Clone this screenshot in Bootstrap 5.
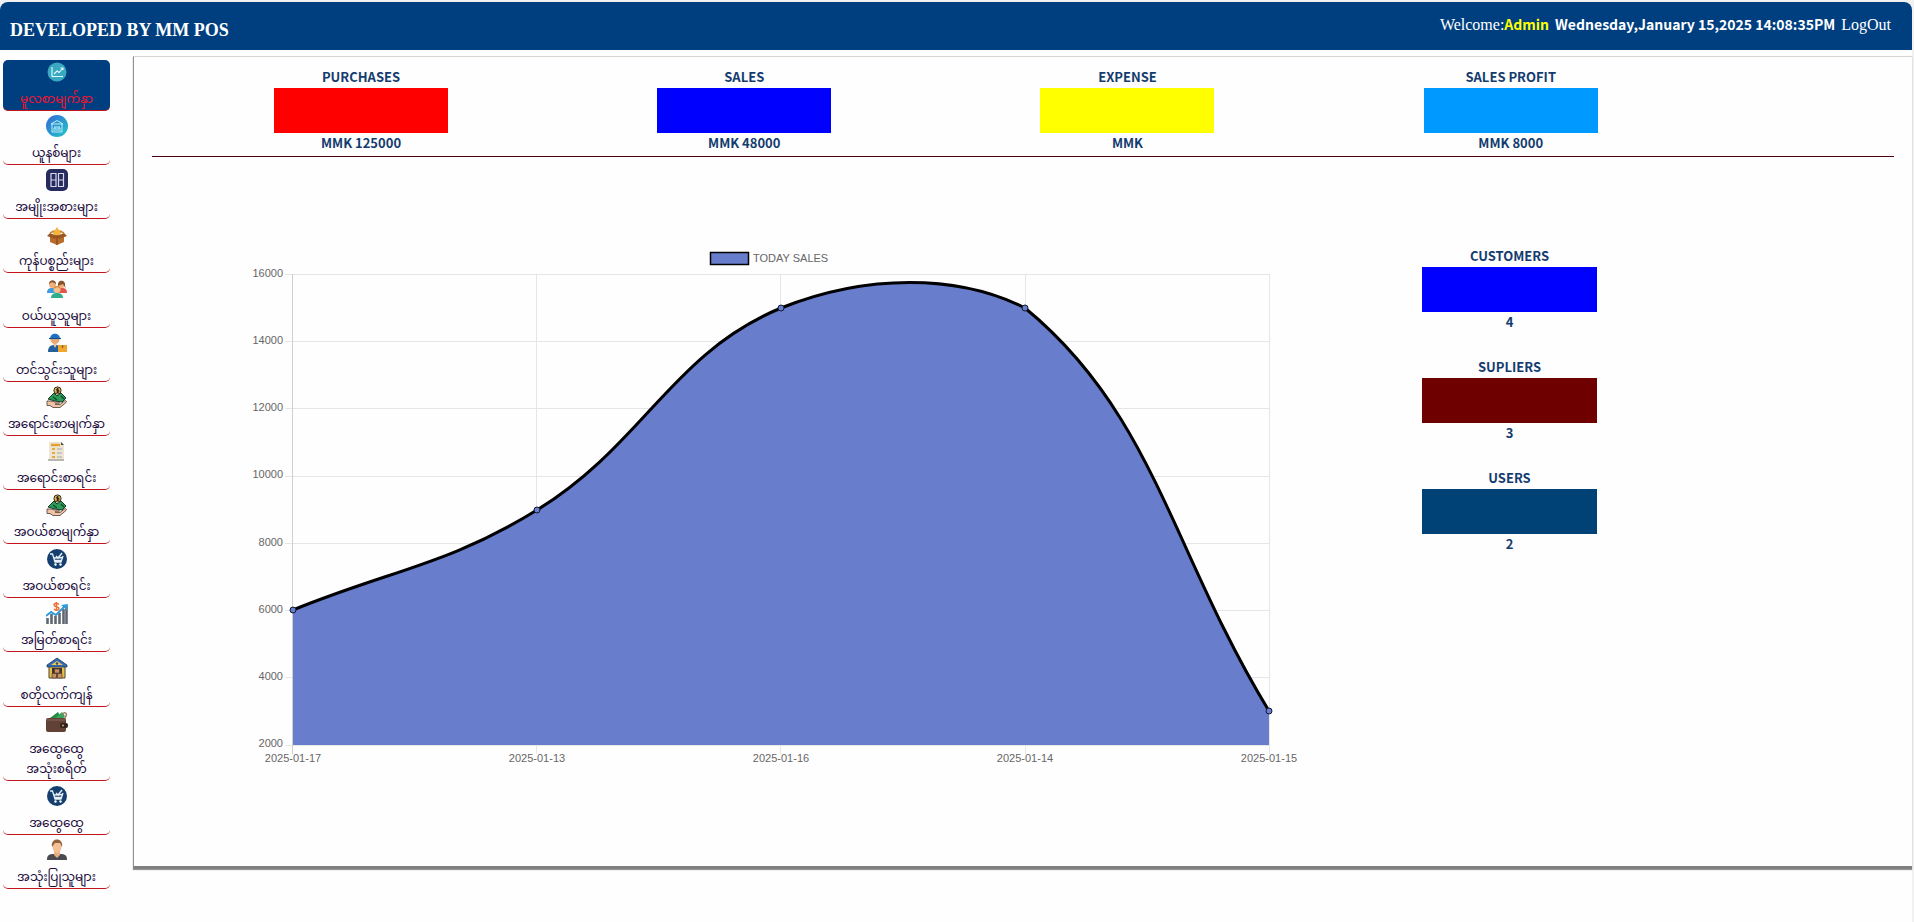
<!DOCTYPE html>
<html lang="my">
<head>
<meta charset="utf-8">
<meta name="viewport" content="width=device-width, initial-scale=1">
<title>MM POS</title>
<link rel="stylesheet" href="https://cdn.jsdelivr.net/npm/bootstrap@5.3.0/dist/css/bootstrap.min.css">
<style>
  body { background: #f1f1f1; font-family: "Noto Sans CJK JP", sans-serif; font-size: 13px; padding: 2px 2px 0 0; }
  .shell { background: #fefefe; min-height: calc(100vh - 2px); border-radius: 8px 8px 0 0; }
  .topbar { background: #003f7f; color: #fff; height: 48px; border-radius: 8px 8px 0 0; padding: 0 21px 0 10px; }
  .brand { font: bold 18px/24px "Liberation Serif", serif; color: #fff; padding-top: 16px; }
  .session { font: 16px/24px "Liberation Serif", serif; padding-top: 10px; }
  .session .who { font: bold 14px/24px "Noto Sans CJK JP", sans-serif; color: #ff0; }
  .session .when { font: bold 14px/24px "Noto Sans CJK JP", sans-serif; margin: 0 6px; }
  .side { width: 107px; margin: 10px 23px 0 3px; padding-bottom: 33px; }
  .side a { color: #200a3c; font: 12px/20px "Noto Sans Myanmar", "Padauk", sans-serif; border-bottom: 1px solid #c4141c; border-radius: 5px; padding: 1px 0 0; text-align: center; text-decoration: none; display: block; white-space: nowrap; }
  .side svg { display: block; width: 22px; height: 22px; margin: 0 auto 7px; }
  .side a.current { background: #003f7f; color: #f01432; }
  .panel { margin-top: 6px; border-top: 1px solid #d8d6d0; border-left: 1px solid #909090; border-bottom: 3px solid #808080; box-shadow: 0 1px 1px #999; padding: 8px 18px 0; margin-bottom: 53px; }
  .totals { width: 88%; margin-left: 1%; }
  .rule { border-top: 1px solid #4d0011; opacity: 1; margin: 3px 0 87px; }
  .stat { color: #143c6e; font-weight: 700; text-align: center; line-height: 23px; }
  .stat b { display: block; min-height: 20px; line-height: 20px; font-weight: inherit; }
  .swatch { height: 45px; width: 174px; max-width: 100%; margin: 0 auto; }
  .people .swatch { width: 100%; }
  .people .stat { margin-bottom: 23px; }
  .board { display: grid; grid-template-columns: 94fr 1057fr 119fr 175fr 297fr; }
  .plot { grid-column: 2; padding-top: 2px; }
  .people { grid-column: 4; }
  .plot svg { display: block; width: 100%; height: auto; font: 11px "Liberation Sans", Arial, sans-serif; }
</style>
<script src="https://cdn.jsdelivr.net/npm/bootstrap@5.3.0/dist/js/bootstrap.bundle.min.js"></script>
</head>
<body>
<svg class="d-none" aria-hidden="true">
  <symbol id="hand-money" viewBox="0 0 22 22">
    <path d="M2 13 8 7 11 10 15 7 20 12 16 16 9 15z" fill="#2c9b58" stroke="#123b27" stroke-width="1"/>
    <path d="m7 11 4 3m4-4 3 3" stroke="#0c4b2c" stroke-width="1.3"/>
    <circle cx="11.500" cy="4.500" r="3.600" fill="#d6b25a" stroke="#3b2b16"/>
    <path d="M12.800 3h-2v1.500h2v1.700h-2.300M11.600 2v5" fill="none" stroke="#241a0e" stroke-width=".9"/>
    <path d="M1 15h4l4 1h4c1 1 0 2-1 2H9l5 .500 5-4c1 0 2 1 1 2l-6 5H7l-3-2H1z" fill="#f0c3a5" stroke="#4a3a35" stroke-width=".8"/>
  </symbol>
  <symbol id="cart" viewBox="0 0 22 22">
    <circle cx="11" cy="11" r="10" fill="#143f6e"/>
    <path d="M4 6h2.500l2.500 8h6l2-6M8 10l8-.500M8.500 12.500h7" fill="none" stroke="#e8f1f8" stroke-width="1.300"/>
    <path d="m10 8 2 2 4-5" fill="none" stroke="#e8f1f8" stroke-width="1.400"/>
    <circle cx="9.500" cy="16.500" r="1.200" fill="#fff"/><circle cx="14.500" cy="16.500" r="1.200" fill="#fff"/>
  </symbol>
</svg>
<div class="shell d-flex flex-column">
  <header class="topbar d-flex justify-content-between">
    <div class="brand">DEVELOPED BY MM POS</div>
    <div class="session d-flex align-items-baseline">
      <span>Welcome:</span><span class="who">Admin</span>
      <span class="when">Wednesday,January 15,2025 14:08:35PM</span>
      <a href="#" class="text-white text-decoration-none">LogOut</a>
    </div>
  </header>
  <div class="d-flex flex-grow-1">
    <nav class="side d-flex flex-column justify-content-between flex-shrink-0">
      <a href="#" class="current"><svg viewBox="0 0 22 22"><circle cx="11" cy="11" r="9.500" fill="#39a9c1"/><path d="M6 6v9.500h11M8 13l3-3 2 1.500 4-4.500M14.500 7H17v2" fill="none" stroke="#e5fbff" stroke-width="1.100"/></svg>မူလစာမျက်နှာ</a>
      <a href="#"><svg viewBox="0 0 22 22"><defs><linearGradient id="sky" x2="1" y2="1"><stop stop-color="#3467d8"/><stop offset="1" stop-color="#24c8c8"/></linearGradient></defs><circle cx="11" cy="11" r="11" fill="url(#sky)"/><path d="m5 9 6-3.500L17 9zM6 9v8h10V9M8 12h6M8 16v-3h2v3m2 0v-3h2v3" fill="none" stroke="#b9f1f6"/></svg>ယူနစ်များ</a>
      <a href="#"><svg viewBox="0 0 22 22"><rect width="22" height="22" rx="5" fill="#252b5c"/><path d="M5 4.500h5v13H5zM12.500 4.500h5v13h-5zM5 11h5m2.500 0h5" fill="none" stroke="#d6d9ee" stroke-width="1.200"/></svg>အမျိုးအစားများ</a>
      <a href="#"><svg viewBox="0 0 22 22"><path d="m11 4 2 3 3 1-2 4H8L6 8l3-1z" fill="#f3b63c"/><path d="M4 12h14v7l-7 3-7-3z" fill="#b96c2c"/><path d="m4 10-3 3 8 3 2-3 2 3 8-3-3-3-7 3z" fill="#9c5623"/><path d="M11 13v9" stroke="#74401c"/><path d="m4 10 4-2m10 2-4-2" stroke="#c98545" stroke-width="1.500"/></svg>ကုန်ပစ္စည်းများ</a>
      <a href="#"><svg viewBox="0 0 22 22"><path d="M1 15c0-4 2-5 5-5s5 1 5 5z" fill="#3c9be0"/><path d="M11 15c0-4 2-5 5-5s5 1 5 5z" fill="#e2574c"/><circle cx="6.500" cy="6.500" r="3.500" fill="#f2ae78"/><circle cx="15.500" cy="6.500" r="3.500" fill="#f2ae78"/><path d="M3 6c0-5 7-5 7 0L6 4zM12 8c-1-7 8-7 7 0l1 3-3-5z" fill="#865530"/><path d="M5 20c0-4 3-5 6-5s6 1 6 5z" fill="#2fae8c"/><circle cx="11" cy="11.500" r="3.500" fill="#f6c08d"/><path d="M7.500 11c0-4 7-4 7 0L11 9z" fill="#d2882e"/></svg>ဝယ်ယူသူများ</a>
      <a href="#"><svg viewBox="0 0 22 22"><circle cx="9" cy="7.500" r="4.500" fill="#eaa973"/><path d="M4 7c0-7 10-7 10 0z" fill="#1e70c4"/><path d="M3 6.500h12" stroke="#174f92" stroke-width="1.200"/><path d="M2 20c0-6 3-7 7-7s7 1 7 7z" fill="#245f9e"/><path d="m7 12 2 4 2-4z" fill="#f3c69d"/><rect x="12" y="13" width="9" height="7" fill="#efa72f"/><path d="M16.500 13v3" stroke="#9c671e" stroke-width="1.500"/></svg>တင်သွင်းသူများ</a>
      <a href="#"><svg><use href="#hand-money"/></svg>အရောင်းစာမျက်နှာ</a>
      <a href="#"><svg viewBox="0 0 22 22"><path d="M3 2h12l3 3v14H3z" fill="#ece5d6"/><path d="M15 2v3h3z" fill="#4b4b4b"/><path d="M2 19h16v2H2z" fill="#b9b6b0"/><path d="M5 5h9" stroke="#e5a029" stroke-width="2.400"/><path d="M6 9h3m-3 4h3m-3 4h3" stroke="#e8a93f" stroke-width="2"/><path d="M11 9h5m-5 4h5m-5 4h5" stroke="#aaa69c"/></svg>အရောင်းစာရင်း</a>
      <a href="#"><svg><use href="#hand-money"/></svg>အဝယ်စာမျက်နှာ</a>
      <a href="#"><svg><use href="#cart"/></svg>အဝယ်စာရင်း</a>
      <a href="#"><svg viewBox="0 0 22 22"><path d="M1.500 22v-6m4 6V12m4 10v-8m4 8V11m4 11V7M20.500 22V4" stroke="#626873" stroke-width="2.600"/><path d="m0 14 5-4 5 3 9-9" fill="none" stroke="#2f9bd8" stroke-width="2"/><path d="m15 3 7-1-1 6z" fill="#2f9bd8"/><path d="M13 2.500C11 .500 8 1 8 3c0 2.500 5 1 5 3.500 0 2-3 2.500-5 .500M10.500 0v9" fill="none" stroke="#ef7036" stroke-width="1.500"/></svg>အမြတ်စာရင်း</a>
      <a href="#"><svg viewBox="0 0 22 22"><path d="M3 8h16v13H3z" fill="#e8bf45" stroke="#4c4630"/><path d="M6 11h10v10H6z" fill="#3d302b"/><path d="m1 8 10-7 10 7v2H1z" fill="#326ab4" stroke="#233c64" stroke-width=".8"/><path d="m5 8 6-4 6 4z" fill="#f0c955"/><circle cx="11" cy="6.500" r="1.200" fill="#304c76"/><path d="M8.500 12h5v4h-5zM6 16.500h4.500V21H6zm5.500 0H16V21h-4.500z" fill="#c49163" stroke="#59402f" stroke-width=".7"/></svg>စတိုလက်ကျန်</a>
      <a href="#"><svg viewBox="0 0 22 22"><path d="m4 7 8-6 4 7z" fill="#218a45"/><path d="m9 7 7-6 3 4-3 4z" fill="#36a45b"/><path d="m17 4c0-4 5-2 3 1l-3 6" fill="none" stroke="#a08160" stroke-width="1.500"/><rect y="7" width="20" height="14" rx="2" fill="#614136"/><path d="M1 9h18" stroke="#8b6658"/><rect x="14" y="12" width="8" height="5" rx="2" fill="#31231e"/><circle cx="17" cy="14.500" r="1" fill="#d7b16a"/></svg>အထွေထွေ<br>အသုံးစရိတ်</a>
      <a href="#"><svg><use href="#cart"/></svg>အထွေထွေ</a>
      <a href="#"><svg viewBox="0 0 22 22"><path d="M1 21c0-6 3-6 10-6s10 0 10 6z" fill="#494b50"/><path d="M8 12h6v4l-3 3-3-3z" fill="#e8ad7e"/><ellipse cx="11" cy="8" rx="4.500" ry="6" fill="#f4c095"/><path d="M6 8C4-2 18-2 16 8l-2-4H9z" fill="#94633d"/></svg>အသုံးပြုသူများ</a>
    </nav>
    <main class="panel flex-grow-1">
      <section class="totals d-flex">
        <div class="stat col-3">PURCHASES<div class="swatch" style="background:#f00"></div><b>MMK 125000</b></div>
        <div class="stat col-3">SALES<div class="swatch" style="background:#00f"></div><b>MMK 48000</b></div>
        <div class="stat col-3">EXPENSE<div class="swatch" style="background:#ff0"></div><b>MMK</b></div>
        <div class="stat col-3">SALES PROFIT<div class="swatch" style="background:#09f"></div><b>MMK 8000</b></div>
      </section>
      <hr class="rule">
      <section class="board">
        <div class="plot">
          <svg viewBox="0 0 1057 530" role="img" aria-label="TODAY SALES">
            <path d="M39 28.500H1023M39 95.500H1023M39 162.500H1023M39 230.500H1023M39 297.500H1023M39 364.500H1023M39 431.500H1023M39 499.500H1023M290.500 28V508M534.500 28V508M779.500 28V508M1023.500 28V508" stroke="#e6e6e6"/>
            <path d="M46.500 28V508" stroke="#cfcfcf"/>
            <path d="M47 364C145 324 202 319 291 264C398 198 425 108 535 62C620 28 712 28 779 62C908 168 925 304 1023 465V499H47Z" fill="#687dcb"/>
            <path d="M47 364C145 324 202 319 291 264C398 198 425 108 535 62C620 28 712 28 779 62C908 168 925 304 1023 465" fill="none" stroke="#000" stroke-width="3"/>
            <g fill="#687dcb" stroke="#101830"><circle cx="47" cy="364" r="3"/><circle cx="291" cy="264" r="3"/><circle cx="535" cy="62" r="3"/><circle cx="779" cy="62" r="3"/><circle cx="1023" cy="465" r="3"/></g>
            <rect x="464.500" y="6.500" width="38" height="12" fill="#687dcb" stroke="#000" stroke-width="1.500"/>
            <g fill="#666">
              <text x="507" y="16">TODAY SALES</text>
              <g text-anchor="end"><text x="37" y="31">16000</text><text x="37" y="98">14000</text><text x="37" y="165">12000</text><text x="37" y="232">10000</text><text x="37" y="300">8000</text><text x="37" y="367">6000</text><text x="37" y="434">4000</text><text x="37" y="501">2000</text></g>
              <g text-anchor="middle"><text x="47" y="516">2025-01-17</text><text x="291" y="516">2025-01-13</text><text x="535" y="516">2025-01-16</text><text x="779" y="516">2025-01-14</text><text x="1023" y="516">2025-01-15</text></g>
            </g>
          </svg>
        </div>
        <div class="people">
          <div class="stat">CUSTOMERS<div class="swatch" style="background:#00f"></div><b>4</b></div>
          <div class="stat">SUPLIERS<div class="swatch" style="background:#6e0000"></div><b>3</b></div>
          <div class="stat">USERS<div class="swatch" style="background:#004275"></div><b>2</b></div>
        </div>
      </section>
    </main>
  </div>
</div>
</body>
</html>
